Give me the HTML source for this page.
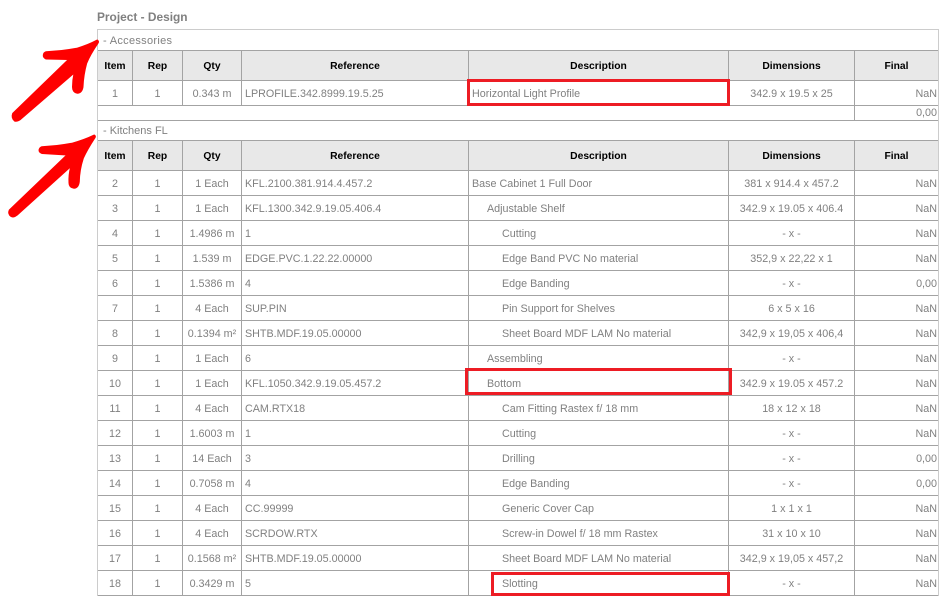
<!DOCTYPE html>
<html><head><meta charset="utf-8"><title>Project - Design</title>
<style>
html,body{margin:0;padding:0;background:#fff;width:951px;height:610px;overflow:hidden}
body{position:relative;font-family:"Liberation Sans",Arial,sans-serif;font-size:10.75px;color:#808080}
.title{position:absolute;left:97px;top:10px;font-size:11.9px;font-weight:bold;line-height:14px;color:#808080}
.outer{position:absolute;left:97px;top:29px;width:840px;height:566px;border:1px solid #ccc;border-bottom:0;box-sizing:content-box;z-index:2}
.grp{position:absolute;left:103px;font-size:11px;line-height:14px;color:#808080}
table{position:absolute;left:97px;border-collapse:collapse;table-layout:fixed;width:842px}
td,th{border:1px solid #a3a3a3;padding:0;white-space:nowrap;overflow:hidden}
th{background:#e8e8e8;color:#000;font-weight:bold;font-size:10.3px;height:27px;padding-top:2px;text-align:center}
td{height:22px;padding-top:2px;font-size:10.75px;text-align:center;color:#808080}
td.l{text-align:left;padding-left:3px}
td.r{text-align:right;padding-right:1px}
td.i1{padding-left:18px}
td.i2{padding-left:33px}
.sub td{height:14px;padding-top:0}
.box{position:absolute;border:3px solid #ed1c24;box-sizing:border-box;z-index:3}
svg{position:absolute;left:0;top:0;z-index:4}
</style></head><body>
<div class="title">Project - Design</div>
<div class="outer"></div>
<div style="position:absolute;left:98px;top:120px;width:840px;height:1px;background:#a3a3a3"></div>
<div class="grp" style="top:34px;letter-spacing:.3px">- Accessories</div>
<table style="top:50px">
<colgroup><col style="width:35px"><col style="width:50px"><col style="width:59px"><col style="width:227px"><col style="width:260px"><col style="width:126px"><col style="width:84px"></colgroup>
<tr><th>Item</th><th>Rep</th><th>Qty</th><th>Reference</th><th>Description</th><th>Dimensions</th><th>Final</th></tr>
<tr><td>1</td><td>1</td><td>0.343 m</td><td class="l">LPROFILE.342.8999.19.5.25</td><td class="l">Horizontal Light Profile</td><td>342.9 x 19.5 x 25</td><td class="r">NaN</td></tr>
<tr class="sub"><td colspan="6"></td><td class="r">0,00</td></tr>
</table>
<div class="grp" style="top:124px">- Kitchens FL</div>
<table style="top:140px">
<colgroup><col style="width:35px"><col style="width:50px"><col style="width:59px"><col style="width:227px"><col style="width:260px"><col style="width:126px"><col style="width:84px"></colgroup>
<tr><th>Item</th><th>Rep</th><th>Qty</th><th>Reference</th><th>Description</th><th>Dimensions</th><th>Final</th></tr>
<tr><td>2</td><td>1</td><td>1 Each</td><td class="l">KFL.2100.381.914.4.457.2</td><td class="l">Base Cabinet 1 Full Door</td><td>381 x 914.4 x 457.2</td><td class="r">NaN</td></tr>
<tr><td>3</td><td>1</td><td>1 Each</td><td class="l">KFL.1300.342.9.19.05.406.4</td><td class="l i1">Adjustable Shelf</td><td>342.9 x 19.05 x 406.4</td><td class="r">NaN</td></tr>
<tr><td>4</td><td>1</td><td>1.4986 m</td><td class="l">1</td><td class="l i2">Cutting</td><td>- x -</td><td class="r">NaN</td></tr>
<tr><td>5</td><td>1</td><td>1.539 m</td><td class="l">EDGE.PVC.1.22.22.00000</td><td class="l i2">Edge Band PVC No material</td><td>352,9 x 22,22 x 1</td><td class="r">NaN</td></tr>
<tr><td>6</td><td>1</td><td>1.5386 m</td><td class="l">4</td><td class="l i2">Edge Banding</td><td>- x -</td><td class="r">0,00</td></tr>
<tr><td>7</td><td>1</td><td>4 Each</td><td class="l">SUP.PIN</td><td class="l i2">Pin Support for Shelves</td><td>6 x 5 x 16</td><td class="r">NaN</td></tr>
<tr><td>8</td><td>1</td><td>0.1394 m²</td><td class="l">SHTB.MDF.19.05.00000</td><td class="l i2">Sheet Board MDF LAM No material</td><td>342,9 x 19,05 x 406,4</td><td class="r">NaN</td></tr>
<tr><td>9</td><td>1</td><td>1 Each</td><td class="l">6</td><td class="l i1">Assembling</td><td>- x -</td><td class="r">NaN</td></tr>
<tr><td>10</td><td>1</td><td>1 Each</td><td class="l">KFL.1050.342.9.19.05.457.2</td><td class="l i1">Bottom</td><td>342.9 x 19.05 x 457.2</td><td class="r">NaN</td></tr>
<tr><td>11</td><td>1</td><td>4 Each</td><td class="l">CAM.RTX18</td><td class="l i2">Cam Fitting Rastex f/ 18 mm</td><td>18 x 12 x 18</td><td class="r">NaN</td></tr>
<tr><td>12</td><td>1</td><td>1.6003 m</td><td class="l">1</td><td class="l i2">Cutting</td><td>- x -</td><td class="r">NaN</td></tr>
<tr><td>13</td><td>1</td><td>14 Each</td><td class="l">3</td><td class="l i2">Drilling</td><td>- x -</td><td class="r">0,00</td></tr>
<tr><td>14</td><td>1</td><td>0.7058 m</td><td class="l">4</td><td class="l i2">Edge Banding</td><td>- x -</td><td class="r">0,00</td></tr>
<tr><td>15</td><td>1</td><td>4 Each</td><td class="l">CC.99999</td><td class="l i2">Generic Cover Cap</td><td>1 x 1 x 1</td><td class="r">NaN</td></tr>
<tr><td>16</td><td>1</td><td>4 Each</td><td class="l">SCRDOW.RTX</td><td class="l i2">Screw-in Dowel f/ 18 mm Rastex</td><td>31 x 10 x 10</td><td class="r">NaN</td></tr>
<tr><td>17</td><td>1</td><td>0.1568 m²</td><td class="l">SHTB.MDF.19.05.00000</td><td class="l i2">Sheet Board MDF LAM No material</td><td>342,9 x 19,05 x 457,2</td><td class="r">NaN</td></tr>
<tr><td>18</td><td>1</td><td>0.3429 m</td><td class="l">5</td><td class="l i2">Slotting</td><td>- x -</td><td class="r">NaN</td></tr>
</table>
<div class="box" style="left:467px;top:79px;width:263px;height:27px"></div>
<div class="box" style="left:465px;top:368px;width:267px;height:27px"></div>
<div class="box" style="left:491px;top:572px;width:239px;height:24px"></div>
<svg width="951" height="610" viewBox="0 0 951 610">
<path fill="#fe0000" stroke="#fe0000" stroke-width="1" stroke-linejoin="round" d="M12.7 113.3 L68.3 59.5 L46 59 Q43 57.5 43.3 55 Q43.5 52.5 46 51.7 Q62 51 76.7 48.3 Q88 45 97.3 40 Q99 41 98.3 42.7 Q90 55 86.7 63.3 Q83.5 75 83 87 Q82 93 77.3 93.3 Q72.5 92.5 72.5 87 Q72.5 80 74 73.3 L20.7 119.3 Q17 122 14.5 121 Q11 118 12.7 113.3 Z"/>
<path fill="#fe0000" stroke="#fe0000" stroke-width="1" stroke-linejoin="round" d="M9.3 210 L66.7 155 L42 153.5 Q39 152.5 39 150 Q39.5 147.5 41.7 146.7 Q57 146 71.7 143.3 Q84 140 94.3 135 Q96 136 95 137.7 Q87 150 83.3 158.3 Q79.5 170 79.3 181.7 Q78.5 188 74 188.3 Q69 187.5 69 183 Q68.5 175 70.7 166.7 L17.3 215 Q13.5 218 11 216.5 Q7.5 214 9.3 210 Z"/>
</svg>
</body></html>
